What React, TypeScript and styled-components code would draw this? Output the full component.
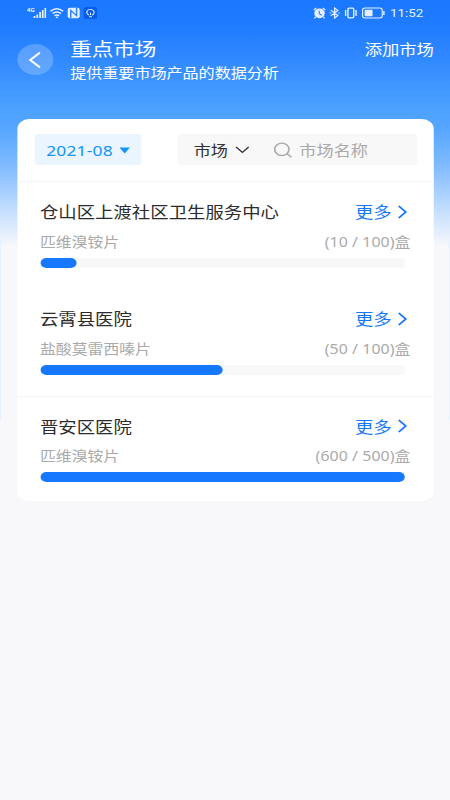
import React from 'react';
import styled, { createGlobalStyle } from 'styled-components';

const GlobalStyle = createGlobalStyle`
  * { box-sizing: border-box; }
  html, body { margin: 0; width: 450px; height: 800px; overflow: hidden; background: #f8f8fb; }
  button { font: inherit; border: 0; padding: 0; background: none; color: inherit; }
`;

const Viewport = styled.div`
  width: 450px;
  height: 800px;
  overflow: hidden;
`;

/* The layout is 388 units wide and is widened to fill the 450px viewport. */
const Screen = styled.main`
  width: 388px;
  height: 800px;
  transform: scaleX(1.1598);
  transform-origin: 0 0;
  display: flex;
  flex-direction: column;
  font-family: 'Noto Sans', 'Noto Sans CJK SC', sans-serif;
  background:
    linear-gradient(#e6f1ff, #e6f1ff) 0 240px / 1px 180px no-repeat,
    linear-gradient(#e6f1ff, #e6f1ff) 100% 240px / 1px 180px no-repeat,
    linear-gradient(
      180deg,
      #1a78ff 0, #1f7cff 25px, #3189ff 60px, #479eff 100px, #55a6ff 128px,
      #7fbaff 165px, #acd2ff 195px, #d5e7fd 222px, #f8f8fb 247px
    );
`;

const StatusBar = styled.div`
  height: 25px;
  padding: 0 23px 0 23px;
  display: flex;
  align-items: center;
  justify-content: space-between;
  color: #e6f1ff;
`;

const StatusGroup = styled.div`
  display: flex;
  align-items: center;
  gap: 3px;
  svg { display: block; }
`;

const Clock = styled.span`
  font-family: Roboto, sans-serif;
  font-size: 11.5px;
  line-height: 16px;
  margin-left: 1px;
`;

const Header = styled.header`
  height: 94px;
  padding: 12px 14px 0 15px;
  display: flex;
  align-items: flex-start;
`;

const BackButton = styled.button`
  width: 31px;
  height: 31px;
  margin-top: 7px;
  padding-right: 2px;
  border-radius: 50%;
  background: rgba(255, 255, 255, 0.22);
  display: flex;
  align-items: center;
  justify-content: center;
`;

const Heading = styled.div`
  flex: 1;
  margin-left: 14.5px;
  color: #fff;
`;

const Title = styled.h1`
  margin: 0;
  font-size: 18.6px;
  line-height: 24px;
  font-weight: 400;
`;

const Subtitle = styled.p`
  margin: 0;
  font-size: 13.85px;
  line-height: 23px;
`;

const AddMarket = styled.button`
  color: #fff;
  font-size: 14.9px;
  line-height: 24px;
`;

const Card = styled.section`
  margin: 0 14px 0 14.7px;
  height: 382px;
  background: #fff;
  border-radius: 10px;
  overflow: hidden;
`;

const Filters = styled.div`
  height: 62px;
  padding: 15px 14.5px 16px 15.2px;
  display: flex;
  justify-content: space-between;
`;

const DatePicker = styled.button`
  width: 92px;
  height: 31px;
  padding: 0 10px;
  border-radius: 3px;
  background: #ebf5ff;
  color: #1296f5;
  font-size: 15px;
  letter-spacing: 0.15px;
  display: flex;
  align-items: center;
  justify-content: space-between;
  svg { margin-top: 2px; }
`;

const SearchBox = styled.div`
  width: 207px;
  height: 31px;
  padding-left: 14.5px;
  border-radius: 3px;
  background: #f8f8f9;
  display: flex;
  align-items: center;
  font-size: 14.8px;
  color: #333;
`;

const Placeholder = styled.span`
  color: #aaa;
  margin-left: 6.5px;
`;

const Scope = styled.span`
  display: flex;
  align-items: center;
  gap: 6px;
  margin-right: 21px;
`;

const Row = styled.article<{ $faint: boolean }>`
  height: 107.3px;
  padding: 17px 20px 0 19.8px;
  border-top: 1px solid ${(p) => (p.$faint ? '#fdfdfd' : '#f5f5f6')};
`;

const Line = styled.div<{ $height: number }>`
  height: ${(p) => p.$height}px;
  display: flex;
  align-items: center;
  justify-content: space-between;
`;

const Hospital = styled.h2`
  margin: 0;
  color: #2c2c2c;
  font-size: 15.85px;
  font-weight: 400;
`;

const More = styled.button`
  display: flex;
  align-items: center;
  gap: 5.3px;
  margin-right: 3px;
  color: #1677f5;
  font-size: 15.85px;
`;

const Detail = styled.span`
  color: #aaa;
  font-size: 13.7px;
`;

const Count = styled(Detail)`
  letter-spacing: 0.07px;
`;

const Track = styled.div`
  width: 314.6px;
  height: 10px;
  margin: 0.5px 0 0 0.2px;
  background: #f8f8f9;
  border-radius: 2px;
`;

const Fill = styled.div`
  height: 10px;
  border-radius: 5px;
  background: #1677ff;
`;

const markets = [
  { name: '仓山区上渡社区卫生服务中心', product: '匹维溴铵片', sold: 10, goal: 100 },
  { name: '云霄县医院', product: '盐酸莫雷西嗪片', sold: 50, goal: 100 },
  { name: '晋安区医院', product: '匹维溴铵片', sold: 600, goal: 500 },
];

const Signal = () => (
  <svg width="17" height="12" viewBox="0 0 17 12" fill="currentColor">
    <text x="0" y="5" fontSize="5.5" fontWeight="700">4G</text>
    <path d="M6 9h1.5v2H6zM8.4 7.5h1.5V11H8.4zM10.8 5h1.5v6h-1.5zM13.1 3h1.5v8h-1.5zM15.4 1h1.5v10h-1.5z" />
  </svg>
);

const Wifi = () => (
  <svg width="12" height="12" viewBox="0 0 12 12" fill="none" stroke="currentColor" strokeWidth="1.5">
    <path d="M.5 4.2Q6-.6 11.5 4.2M2.3 6.5Q6 3.4 9.7 6.5M4 8.7Q6 7.1 8 8.7" />
    <circle cx="6" cy="10.3" r=".9" fill="currentColor" stroke="none" />
  </svg>
);

const Nfc = () => (
  <svg width="11" height="12" viewBox="0 0 11 12">
    <rect x=".3" y=".7" width="10.4" height="10.6" rx="2" fill="currentColor" />
    <path d="M3 11V3.4L8 8.6V1" fill="none" stroke="#247eff" strokeWidth="1.2" />
  </svg>
);

const Bulb = () => (
  <svg width="12" height="12" viewBox="0 0 12 12">
    <rect width="12" height="12" rx="3" fill="#075be8" />
    <path d="M4.7 8.1C1.6 6.4 2.7 2.4 6 2.4s4.4 4 1.3 5.7M4.7 9.7h2.6M6 5.6v2.6" fill="none" stroke="currentColor" strokeWidth=".9" />
  </svg>
);

const Alarm = () => (
  <svg width="11" height="12" viewBox="0 0 12 12" preserveAspectRatio="none">
    <circle cx="6" cy="6.3" r="4.9" fill="currentColor" />
    <path d="M.5 3 3 1M9 1l2.5 2M2.5 10 1 11.3M9.5 10l1.5 1.3" stroke="currentColor" />
    <path d="M5.7 3.8v3l2.4 1.4" stroke="#247eff" fill="none" />
  </svg>
);

const Bluetooth = () => (
  <svg width="9" height="12" viewBox="0 0 9 12" fill="none" stroke="currentColor" strokeWidth="1.1">
    <path d="M1.2 3.2 7.3 8.6 4.5 11V1l2.8 2.4L1.2 8.8M0 6h1.4M7.6 6H9" />
  </svg>
);

const Vibrate = () => (
  <svg width="13" height="12" viewBox="0 0 13 12" fill="none" stroke="currentColor" strokeWidth="1.2">
    <rect x="4" y="1.2" width="5" height="9.6" rx="1" />
    <path d="M2 3v6M11 3v6" />
  </svg>
);

const Battery = () => (
  <svg width="20" height="12" viewBox="0 0 20 12">
    <rect x=".6" y="1" width="17" height="10" rx="2.2" fill="none" stroke="currentColor" />
    <rect x="2.4" y="2.8" width="6.8" height="6.4" rx=".6" fill="currentColor" />
    <path d="M19 4v4" stroke="currentColor" strokeWidth="1.2" />
  </svg>
);

const Chevron = () => (
  <svg width="8" height="14" viewBox="0 0 8 14" fill="none" stroke="currentColor" strokeWidth="1.7">
    <path d="m.8 1 6 6-6 6" />
  </svg>
);

export default function App() {
  return (
    <Viewport>
      <GlobalStyle />
      <Screen>
        <StatusBar>
          <StatusGroup><Signal /><Wifi /><Nfc /><Bulb /></StatusGroup>
          <StatusGroup><Alarm /><Bluetooth /><Vibrate /><Battery /><Clock>11:52</Clock></StatusGroup>
        </StatusBar>
        <Header>
          <BackButton aria-label="返回">
            <svg width="10" height="16" viewBox="0 0 10 16" fill="none" stroke="#fff" strokeWidth="1.8" strokeLinecap="round">
              <path d="M9 1 1 8l8 7" />
            </svg>
          </BackButton>
          <Heading>
            <Title>重点市场</Title>
            <Subtitle>提供重要市场产品的数据分析</Subtitle>
          </Heading>
          <AddMarket>添加市场</AddMarket>
        </Header>
        <Card>
          <Filters>
            <DatePicker>
              2021-08
              <svg width="9" height="7" viewBox="0 0 9 7"><path d="M0 .5h9l-4.5 6z" fill="currentColor" /></svg>
            </DatePicker>
            <SearchBox>
              <Scope>
                市场
                <svg width="12" height="8" viewBox="0 0 12 8" fill="none" stroke="currentColor" strokeWidth="1.2"><path d="m.6 1 5.4 5.5L11.4 1" /></svg>
              </Scope>
              <svg width="16" height="16" viewBox="0 0 16 16" fill="none" stroke="#aaa" strokeWidth="1.4"><circle cx="7" cy="7.3" r="6.2" /><path d="m11.5 11.7 3.8 3.6" /></svg>
              <Placeholder>市场名称</Placeholder>
            </SearchBox>
          </Filters>
          {markets.map((m, i) => (
            <Row key={m.name} $faint={i === 1}>
              <Line $height={25}>
                <Hospital>{m.name}</Hospital>
                <More>更多<Chevron /></More>
              </Line>
              <Line $height={33}>
                <Detail>{m.product}</Detail>
                <Count>({m.sold} / {m.goal})盒</Count>
              </Line>
              <Track>
                <Fill style={{ width: `${Math.min(100, (m.sold / m.goal) * 100)}%` }} />
              </Track>
            </Row>
          ))}
        </Card>
      </Screen>
    </Viewport>
  );
}
